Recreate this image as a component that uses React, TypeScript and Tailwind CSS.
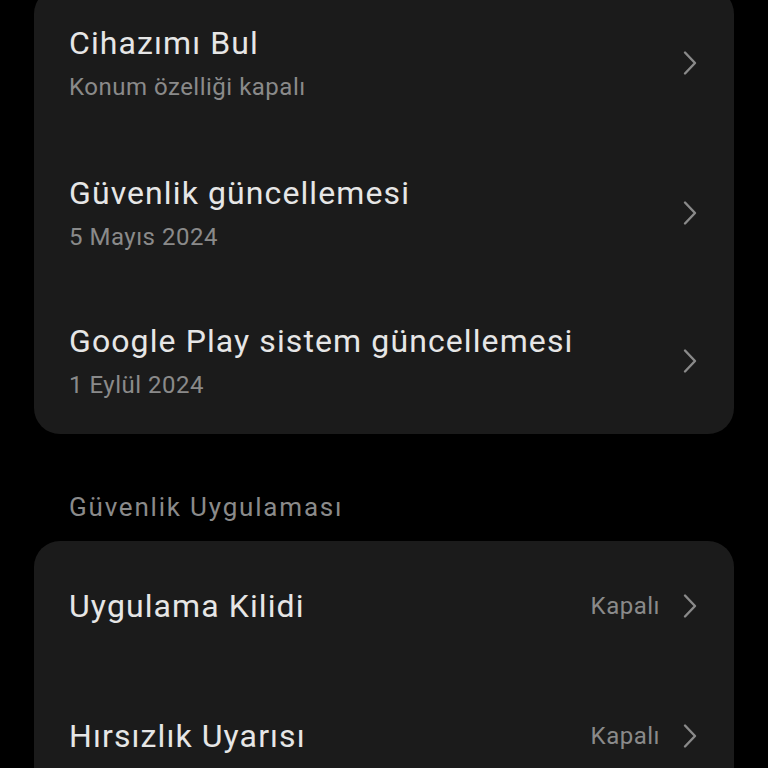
function Chevron() {
  return (
    <svg width="16" height="26" viewBox="0 0 16 26" fill="none" className="shrink-0">
      <path d="M3 2.5 L13 13 L3 23.5" stroke="#8a8a8a" strokeWidth="2.4" strokeLinecap="round" strokeLinejoin="round" />
    </svg>
  );
}

type InfoRow = { title: string; sub: string; h: string };

const infoRows: InfoRow[] = [
  { title: 'Cihazımı Bul', sub: 'Konum özelliği kapalı', h: 'h-[150px]' },
  { title: 'Güvenlik güncellemesi', sub: '5 Mayıs 2024', h: 'h-[150px]' },
  { title: 'Google Play sistem güncellemesi', sub: '1 Eylül 2024', h: 'h-[146px]' },
];

const appRows = [
  { title: 'Uygulama Kilidi', value: 'Kapalı' },
  { title: 'Hırsızlık Uyarısı', value: 'Kapalı' },
];

export default function App() {
  return (
    <div
      className="w-[768px] h-[768px] overflow-hidden bg-black"
      style={{ fontFamily: 'Roboto, "Noto Sans", sans-serif' }}
    >
      {/* Top card, scrolled partly out of view */}
      <div className="mx-[34px] mt-[-12px] rounded-[26px] bg-[#1b1b1b]">
        {infoRows.map((r) => (
          <div key={r.title} className={`${r.h} flex items-center justify-between pl-[35px] pr-[36px]`}>
            <div className="flex flex-col gap-[10px]">
              <span className="text-[32px] leading-[38px] tracking-[1.1px] text-[#e6e6e6]">{r.title}</span>
              <span className="text-[24px] leading-[30px] tracking-[0.5px] text-[#8a8a8a]">{r.sub}</span>
            </div>
            <Chevron />
          </div>
        ))}
      </div>

      <div className="mt-[57px] mb-[18px] pl-[69px] text-[26px] leading-[32px] tracking-[1.8px] text-[#8a8a8a]">
        Güvenlik Uygulaması
      </div>

      <div className="mx-[34px] rounded-[26px] bg-[#1b1b1b]">
        {appRows.map((r) => (
          <div key={r.title} className="h-[130px] flex items-center justify-between pl-[35px] pr-[36px]">
            <span className="text-[32px] leading-[38px] tracking-[1.1px] text-[#e6e6e6]">{r.title}</span>
            <div className="flex items-center gap-[22px]">
              <span className="text-[24px] leading-[30px] tracking-[0.5px] text-[#8a8a8a]">{r.value}</span>
              <Chevron />
            </div>
          </div>
        ))}
      </div>
    </div>
  );
}
